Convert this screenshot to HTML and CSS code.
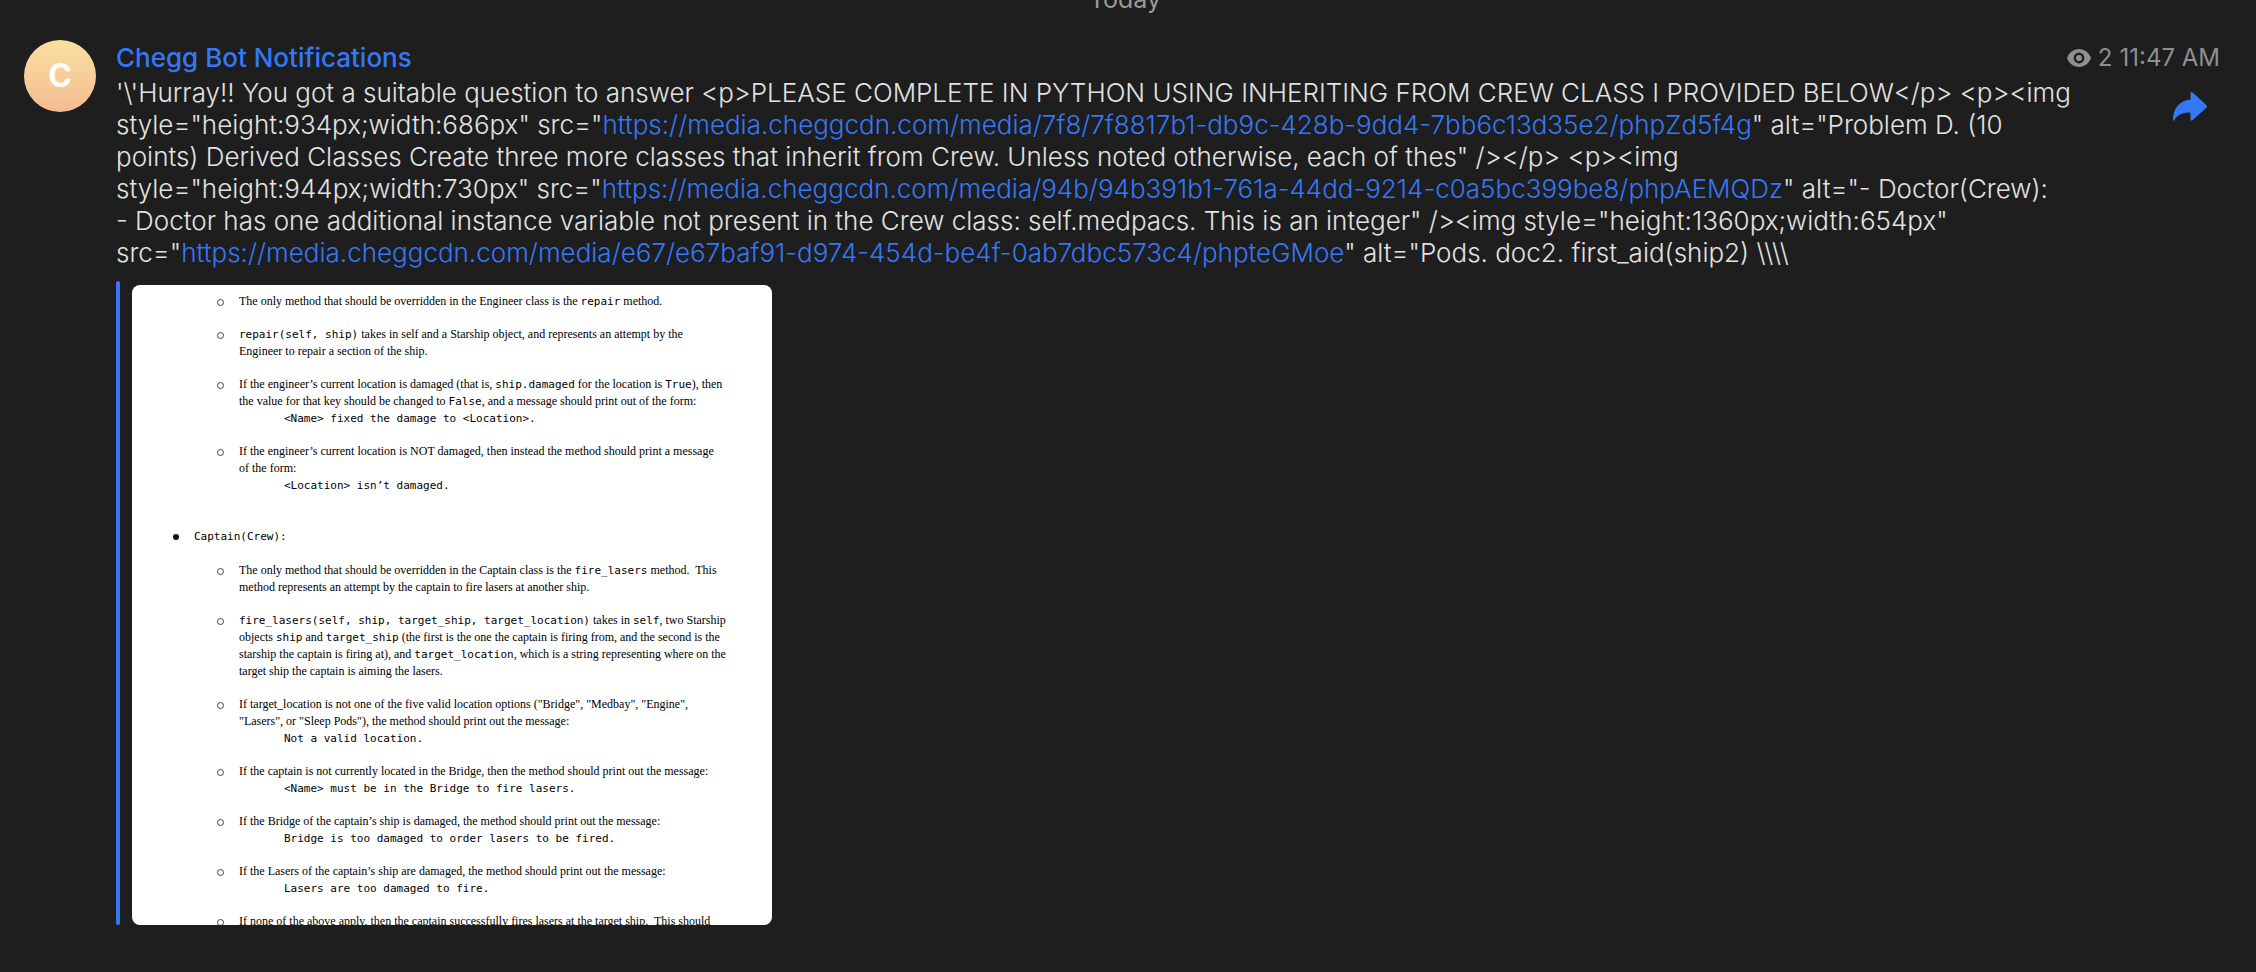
FILE: index.html
```html
<!DOCTYPE html>
<html lang="en">
<head>
<meta charset="utf-8">
<title>Chegg Bot Notifications</title>
<link rel="stylesheet" href="styles.css">
</head>
<body>
<main class="chat">
  <div class="day">Today</div>
  <article class="message">
    <div class="avatar" aria-hidden="true">C</div>
    <div class="content">
      <header class="head">
        <h1 class="sender"><a href="#sender">Chegg Bot Notifications</a></h1>
        <div class="meta">
          <svg class="eye" viewBox="0 0 24 18" aria-hidden="true"><path fill-rule="evenodd" d="M12 0C6.400 0 2 3.600 0 9c2 5.400 6.400 9 12 9s10-3.600 12-9C22 3.600 17.600 0 12 0Zm0 3.600a5.400 5.400 0 1 1 0 10.800 5.400 5.400 0 0 1 0-10.800Z"/><circle cx="12" cy="9" r="3"/></svg>
          <span>2</span>
          <time>11:47 AM</time>
        </div>
      </header>
      <div class="body">
        <p class="text">'\'Hurray!! You got a suitable question to answer &lt;p&gt;PLEASE COMPLETE IN PYTHON USING INHERITING FROM CREW CLASS I PROVIDED BELOW&lt;/p&gt; &lt;p&gt;&lt;img<br>
style="height:934px;width:686px" src="<a href="#img1">https://media.cheggcdn.com/media/7f8/7f8817b1-db9c-428b-9dd4-7bb6c13d35e2/phpZd5f4g</a>" alt="Problem D. (10<br>
points) Derived Classes Create three more classes that inherit from Crew. Unless noted otherwise, each of thes" /&gt;&lt;/p&gt; &lt;p&gt;&lt;img<br>
style="height:944px;width:730px" src="<a href="#img2">https://media.cheggcdn.com/media/94b/94b391b1-761a-44dd-9214-c0a5bc399be8/phpAEMQDz</a>" alt="- Doctor(Crew):<br>
- Doctor has one additional instance variable not present in the Crew class: self.medpacs. This is an integer" /&gt;&lt;img style="height:1360px;width:654px"<br>
src="<a href="#img3">https://media.cheggcdn.com/media/e67/e67baf91-d974-454d-be4f-0ab7dbc573c4/phpteGMoe</a>" alt="Pods. doc2. first_aid(ship2) \\\\</p>
        <button class="share" type="button" aria-label="Share">
          <svg viewBox="0 0 34 29" aria-hidden="true"><path d="M17.500 1.200c0-1.200 1.200-1.600 2.100-.8l13.700 12.700c.9.800.9 1.800 0 2.600L19.600 28.200c-.9.800-2.100.4-2.100-.8v-6.800C9.500 20.600 4.500 22.500 1.300 28.300c-.4.700-1.300.5-1.300-.4C0 16.500 6.500 8.500 17.500 7.800Z"/></svg>
        </button>
      </div>
      <div class="attachment">
        <div class="page">
          <ul class="rules">
            <li>The only method that should be overridden in the Engineer class is the <code>repair</code> method.</li>
            <li><code>repair(self, ship)</code> takes in self and a Starship object, and represents an attempt by the<br>Engineer to repair a section of the ship.</li>
            <li>If the engineer’s current location is damaged (that is, <code>ship.damaged</code> for the location is <code>True</code>), then<br>the value for that key should be changed to <code>False</code>, and a message should print out of the form:<code class="output">&lt;Name&gt; fixed the damage to &lt;Location&gt;.</code></li>
            <li>If the engineer’s current location is NOT damaged, then instead the method should print a message<br>of the form:<code class="output">&lt;Location&gt; isn’t damaged.</code></li>
          </ul>
          <h2 class="class-name"><code>Captain(Crew):</code></h2>
          <ul class="rules">
            <li>The only method that should be overridden in the Captain class is the <code>fire_lasers</code> method.&nbsp; This<br>method represents an attempt by the captain to fire lasers at another ship.</li>
            <li><code>fire_lasers(self, ship, target_ship, target_location)</code> takes in <code>self</code>, two Starship<br>objects <code>ship</code> and <code>target_ship</code> (the first is the one the captain is firing from, and the second is the<br>starship the captain is firing at), and <code>target_location</code>, which is a string representing where on the<br>target ship the captain is aiming the lasers.</li>
            <li>If target_location is not one of the five valid location options ("Bridge", "Medbay", "Engine",<br>"Lasers", or "Sleep Pods"), the method should print out the message:<code class="output">Not a valid location.</code></li>
            <li>If the captain is not currently located in the Bridge, then the method should print out the message:<code class="output">&lt;Name&gt; must be in the Bridge to fire lasers.</code></li>
            <li>If the Bridge of the captain’s ship is damaged, the method should print out the message:<code class="output">Bridge is too damaged to order lasers to be fired.</code></li>
            <li>If the Lasers of the captain’s ship are damaged, the method should print out the message:<code class="output">Lasers are too damaged to fire.</code></li>
            <li>If none of the above apply, then the captain successfully fires lasers at the target ship.&nbsp; This should</li>
          </ul>
        </div>
      </div>
    </div>
  </article>
</main>
</body>
</html>
```
FILE: styles.css
```css
* { box-sizing: border-box; }
body {
  margin: 0;
  min-height: 100vh;
  overflow: hidden;
  background: #1e1e1e;
  color: #e2e2e2;
  font-family: Inter, "Liberation Sans", sans-serif;
  font-size: 26px;
  line-height: 32px;
}
a { color: #3478f6; text-decoration: none; }
.day {
  margin-top: -17px;
  padding-right: 6px;
  text-align: center;
  font-size: 25px;
  color: #9a9a9a;
}
.message {
  display: flex;
  gap: 20px;
  padding: 25px 36px 44px 24px;
}
.avatar {
  flex: none;
  width: 72px;
  height: 72px;
  border-radius: 50%;
  background: linear-gradient(#fadfa0, #f4bc92);
  color: #fff;
  font-size: 32px;
  font-weight: 700;
  line-height: 72px;
  text-align: center;
}
.content { flex: 1; min-width: 0; }
.head {
  display: flex;
  justify-content: space-between;
  align-items: center;
  height: 36px;
}
.sender { margin: 0; font-size: 26px; font-weight: 500; }
.meta {
  display: flex;
  align-items: center;
  gap: 7px;
  font-size: 24px;
  color: #8f8f8f;
}
.eye { width: 24px; height: 18px; fill: #8f8f8f; }
.body { display: flex; justify-content: space-between; }
.text { margin: 0; padding-top: 1px; font-weight: 340; white-space: nowrap; }
.share {
  flex: none;
  margin: 16px 13px 0 0;
  padding: 0;
  border: 0;
  background: none;
  height: 29px;
}
.share svg { display: block; width: 34px; height: 29px; fill: #3478f6; }
.attachment {
  position: relative;
  display: flex;
  margin-top: 12px;
  padding: 4px 0 0 16px;
}
.attachment::before {
  content: "";
  position: absolute;
  left: 0;
  top: 0;
  bottom: 0;
  width: 4px;
  border-radius: 2px;
  background: #3478f6;
}
.page {
  width: 640px;
  max-width: 100%;
  aspect-ratio: 1;
  overflow: hidden;
  padding: 8px 0 0 62px;
  border-radius: 8px;
  background: #fff;
  color: #000;
  font-family: "Liberation Serif", serif;
  font-size: 12px;
  line-height: 17px;
  white-space: nowrap;
}
.page code { font-family: "DejaVu Sans Mono", monospace; font-size: 11px; line-height: 1; }
.rules {
  display: flex;
  flex-direction: column;
  gap: 16px;
  margin: 0;
  padding: 0 0 0 45px;
  list-style: none;
}
.rules li { position: relative; }
.rules li::before {
  content: "";
  position: absolute;
  left: -22px;
  top: 6px;
  width: 5px;
  height: 5px;
  border: 1px solid #444;
  border-radius: 50%;
}
.page .output { display: block; padding-left: 45px; line-height: 17px; }
.class-name {
  position: relative;
  margin: 34px 0 17px;
  font-size: 12px;
  font-weight: 400;
  line-height: 17px;
}
.class-name::before {
  content: "";
  position: absolute;
  left: -21px;
  top: 6px;
  width: 6px;
  height: 6px;
  border-radius: 50%;
  background: #111;
}
```
